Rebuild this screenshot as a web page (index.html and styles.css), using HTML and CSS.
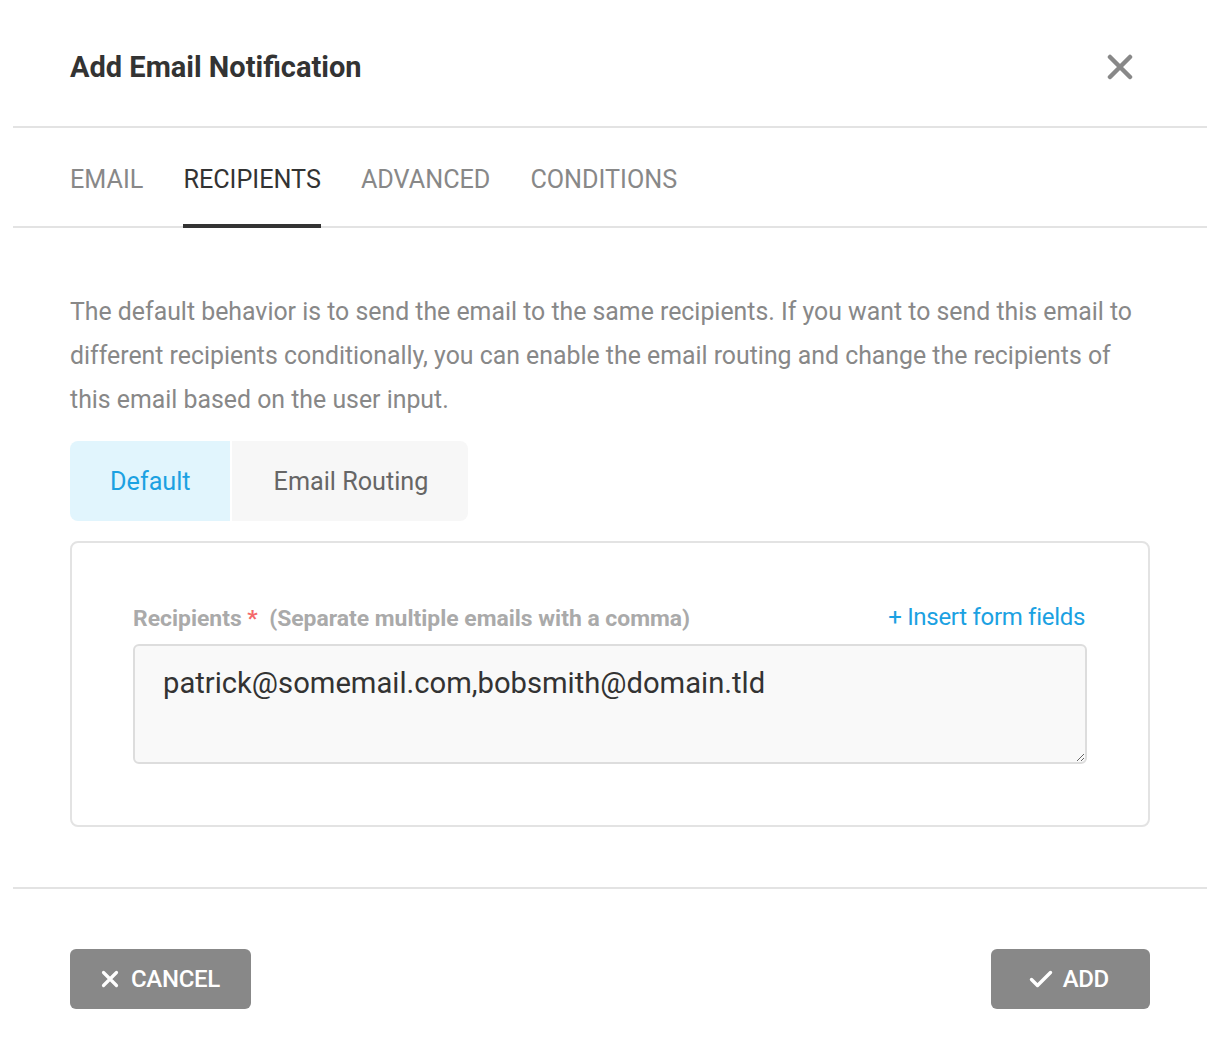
FILE: index.html
```html
<!DOCTYPE html>
<html lang="en">

<head>
    <meta charset="UTF-8">
    <meta name="viewport" content="width=device-width, initial-scale=1.0">
    <title>Add Email Notification</title>
    <link rel="stylesheet" href="styles.css">
</head>

<body>
    <div class="Modal">
        <!-- HEADER -->
        <header class="Modal-header">
            <h1 class="Modal-title">Add Email Notification</h1>
            <button class="Modal-close" aria-label="Close">
                <svg width="26" height="26" viewBox="0 0 26 26">
                    <path d="M3 3 L23 23 M23 3 L3 23" stroke="#888" stroke-width="4.5" stroke-linecap="round" />
                </svg>
            </button>
        </header>

        <!-- TABS -->
        <nav class="Tabs">
            <a href="#" class="Tabs-item">EMAIL</a>
            <a href="#" class="Tabs-item is-active">RECIPIENTS</a>
            <a href="#" class="Tabs-item">ADVANCED</a>
            <a href="#" class="Tabs-item">CONDITIONS</a>
        </nav>

        <!-- BODY -->
        <main class="Modal-body">
            <p class="Modal-text">The default behavior is to send the email to the same recipients. If you want to send this email to different recipients conditionally, you can enable the email routing and change the recipients of this email based on the user input.</p>

            <div class="Switch">
                <button class="Switch-item is-active">Default</button>
                <button class="Switch-item">Email Routing</button>
            </div>

            <section class="Panel">
                <div class="Field-head">
                    <label class="Field-label">Recipients <span class="Field-required">*</span> &nbsp;(Separate multiple emails with a comma)</label>
                    <a href="#" class="Field-insert">+ Insert form fields</a>
                </div>
                <textarea class="Field-input">patrick@somemail.com,bobsmith@domain.tld</textarea>
            </section>
        </main>

        <!-- FOOTER -->
        <footer class="Modal-footer">
            <button class="Button">
                <svg width="18" height="18" viewBox="0 0 18 18">
                    <path d="M2.5 2.5 L15.5 15.5 M15.5 2.5 L2.5 15.5" stroke="#fff" stroke-width="3.2" stroke-linecap="round" />
                </svg>
                CANCEL
            </button>
            <button class="Button">
                <svg width="24" height="18" viewBox="0 0 24 18">
                    <path d="M2.5 9.5 L8.5 15.5 L21.5 2.5" stroke="#fff" stroke-width="3.4" fill="none" stroke-linecap="round" stroke-linejoin="round" />
                </svg>
                ADD
            </button>
        </footer>
    </div>
</body>

</html>
```

FILE: styles.css
```css
/* VARIABLES */
:root {
    --color-text: #333;
    --color-muted: #888;
    --color-label: #aaa;
    --color-line: #e3e3e3;
    --color-blue: #1ba1e2;
    --padding-side: 57px;
}

/* RESET */
* {
    margin: 0;
    padding: 0;
    box-sizing: border-box;
    font-family: Roboto, "Liberation Sans", sans-serif;
}

body {
    background: #fff;
    color: var(--color-text);
}

button {
    border: none;
    background: none;
    cursor: pointer;
}

/* MODAL */
.Modal {
    margin: 0 13px;
}

.Modal-header {
    height: 128px;
    padding: 8px var(--padding-side) 0;
    display: flex;
    justify-content: space-between;
    align-items: center;
    border-bottom: 2px solid var(--color-line);
}

.Modal-title {
    font-size: 29px;
    font-weight: 700;
    color: #333;
}

.Modal-close {
    display: flex;
    margin-right: 17px;
}

/* TABS */
.Tabs {
    height: 100px;
    padding: 0 var(--padding-side);
    display: flex;
    gap: 40px;
    border-bottom: 2px solid var(--color-line);
}

.Tabs-item {
    display: flex;
    align-items: center;
    font-size: 25.2px;
    color: var(--color-muted);
    text-decoration: none;
    border-bottom: 4px solid transparent;
    margin-bottom: -2px;
    padding-top: 6px;
}

.Tabs-item.is-active {
    color: #333;
    border-bottom-color: #333;
}

/* BODY */
.Modal-body {
    padding: 62px var(--padding-side) 60px;
    border-bottom: 2px solid var(--color-line);
}

.Modal-text {
    font-size: 24.85px;
    line-height: 44px;
    color: var(--color-muted);
}

.Switch {
    display: flex;
    gap: 2px;
    margin-top: 19px;
}

.Switch-item {
    height: 80px;
    font-size: 25.2px;
    color: #666;
    background: #f7f7f7;
    padding: 0 40px 0 42px;
}

.Switch-item:first-child {
    border-radius: 8px 0 0 8px;
}

.Switch-item:last-child {
    border-radius: 0 8px 8px 0;
}

.Switch-item.is-active {
    background: #e1f5fd;
    color: var(--color-blue);
    padding: 0 39px 0 40px;
}

.Panel {
    margin-top: 20px;
    border: 2px solid var(--color-line);
    border-radius: 8px;
    padding: 62px 61px 61px;
}

.Field-head {
    display: flex;
    justify-content: space-between;
    align-items: center;
    margin-bottom: 12px;
}

.Field-label {
    font-size: 22.9px;
    font-weight: 700;
    color: var(--color-label);
}

.Field-required {
    color: #f4696b;
}

.Field-insert {
    font-size: 24px;
    color: var(--color-blue);
    text-decoration: none;
    letter-spacing: -0.3px;
    margin-top: -4px;
    margin-right: 2px;
}

.Field-input {
    display: block;
    width: 100%;
    height: 120px;
    background: #f9f9f9;
    border: 2px solid #ddd;
    border-radius: 6px;
    padding: 20px 28px;
    font-size: 29.2px;
    color: #333;
    resize: vertical;
    outline: none;
}

/* FOOTER */
.Modal-footer {
    padding: 60px var(--padding-side);
    display: flex;
    justify-content: space-between;
}

.Button {
    height: 60px;
    background: #888;
    border-radius: 6px;
    color: #fff;
    font-size: 24px;
    font-weight: 500;
    display: flex;
    align-items: center;
    gap: 12px;
    padding: 0 31px;
    letter-spacing: -0.3px;
}

.Button:last-child {
    padding: 0 41px 0 38px;
    gap: 10px;
}
```
